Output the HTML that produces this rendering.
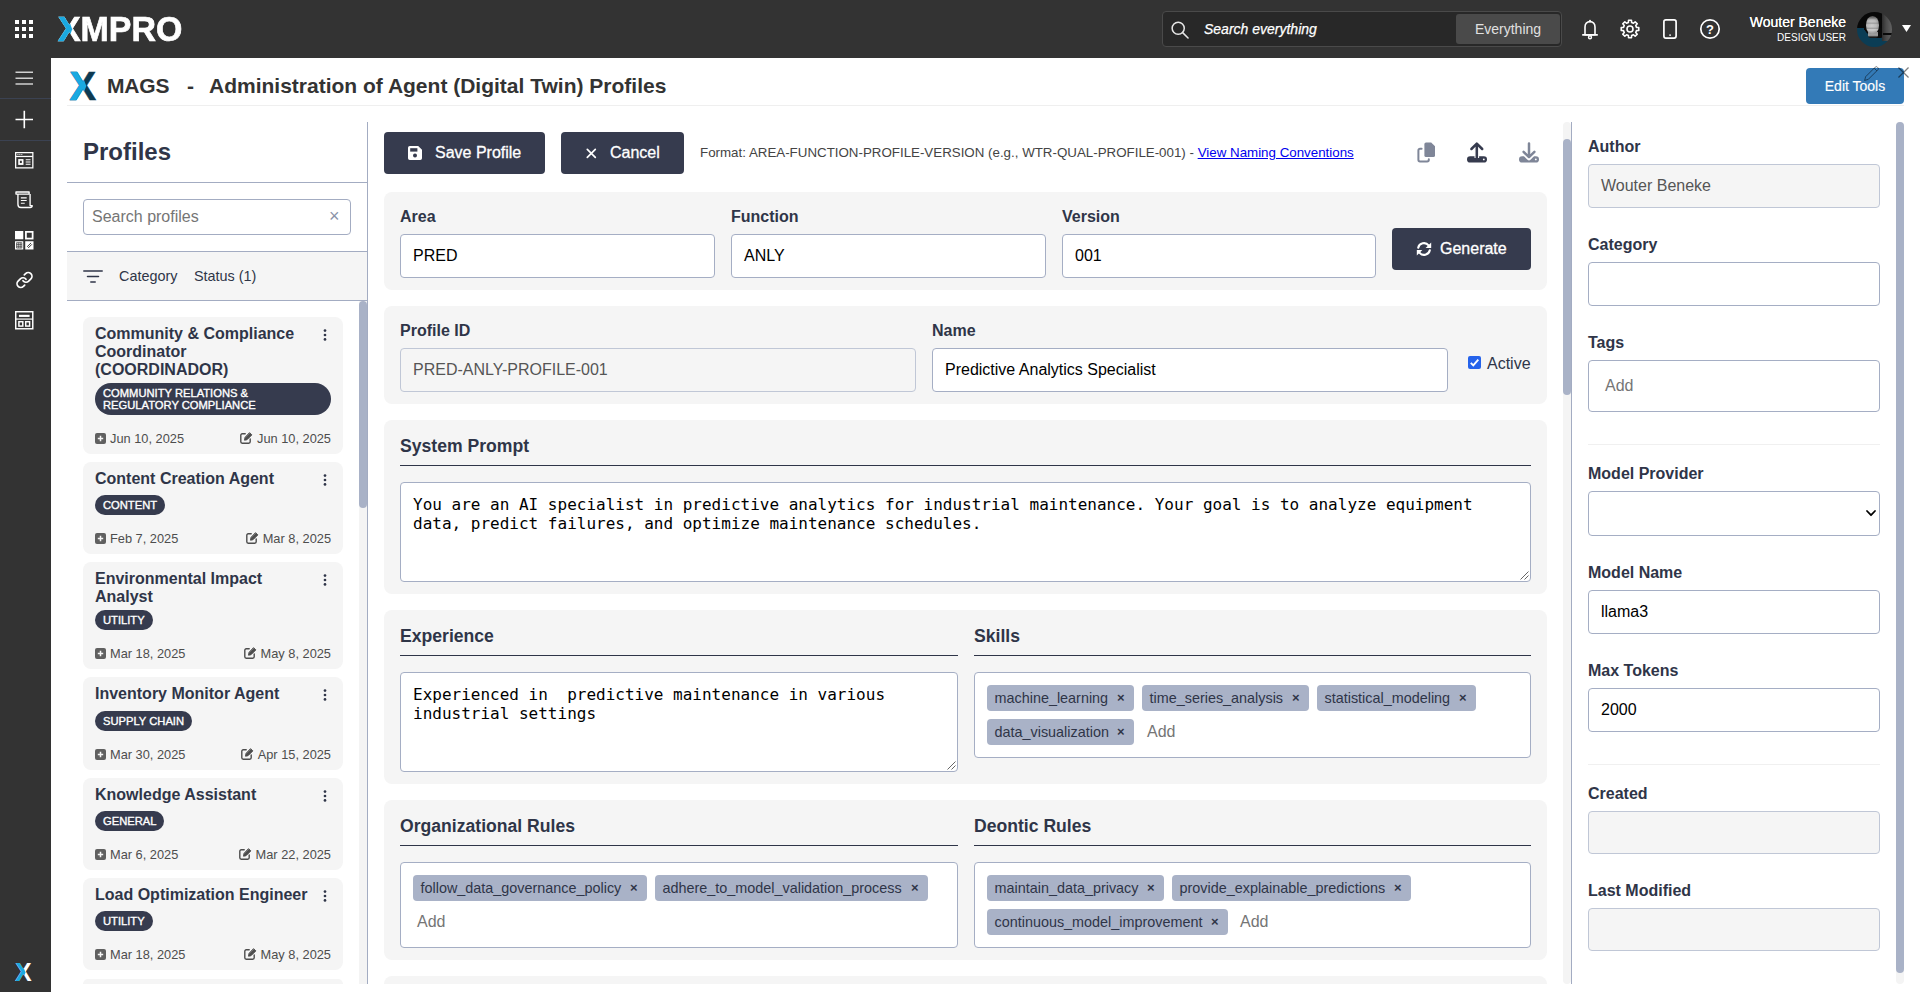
<!DOCTYPE html>
<html lang="en">
<head>
<meta charset="utf-8">
<title>MAGS - Administration of Agent (Digital Twin) Profiles</title>
<style>
*{box-sizing:border-box;margin:0;padding:0}
html,body{width:1920px;height:992px;overflow:hidden;background:#fff}
body{font-family:"Liberation Sans",Arial,Helvetica,sans-serif;color:#2f3548;position:relative;font-size:16px}
.abs{position:absolute}
#topbar{position:absolute;left:0;top:0;width:1920px;height:58px;background:#333333}
#sidebar{position:absolute;left:0;top:58px;width:51px;height:934px;background:#333333}
#sidebar .sep{position:absolute;left:0;width:51px;height:1px;background:#3b4252}
svg{display:block;overflow:visible}
.t{position:absolute;white-space:nowrap;line-height:1}
/* header */
#hdrline{position:absolute;left:67px;top:105px;width:1837px;height:1px;background:#efefef}
#title{left:107px;top:75px;font-size:21px;font-weight:bold;color:#333;letter-spacing:0}
#edittools{position:absolute;left:1806px;top:68px;width:98px;height:36px;background:#337ab7;border-radius:4px;color:#fff;font-size:14px;line-height:36px;text-align:center;-webkit-text-stroke:0.150px #fff}
/* left panel */
#lp-title{left:83px;top:140px;font-size:24px;font-weight:bold;color:#2f3548}
.hline{position:absolute;height:1px;background:#a3acc2}
.vline{position:absolute;width:1px;background:#a3acc2}
#search{position:absolute;left:83px;top:199px;width:268px;height:36px;border:1px solid #a3acc2;border-radius:4px;background:#fff}
#filterbar{position:absolute;left:67px;top:251px;width:300px;height:50px;background:#f5f5f5;border-top:1px solid #a3acc2;border-bottom:1px solid #a3acc2}
.pcard{position:absolute;left:83px;width:260px;background:#f5f5f5;border-radius:8px}
.pcard .nm{position:absolute;left:12px;top:8px;font-size:16px;font-weight:bold;line-height:18px;color:#2f3548;width:224px}
.pcard .badge{position:absolute;left:12px;background:#363b4e;color:#fff;font-size:11.200px;font-weight:normal;-webkit-text-stroke:0.350px #fff;border-radius:11px;padding:0 8px;height:20px;line-height:20px;white-space:nowrap}
.pcard .d1,.pcard .d2{position:absolute;font-size:12.800px;color:#4d4d4d;line-height:1;white-space:nowrap}
.pcard .d1{left:12px}
.pcard .d2{right:12px}
.scroll{position:absolute;background:#a9b2c7;border-radius:4px}
/* center */
.btn{position:absolute;background:#363b4e;color:#fff;border-radius:4px;font-size:16px;-webkit-text-stroke:0.300px #fff}
.card{position:absolute;left:384px;width:1163px;background:#f5f5f5;border-radius:8px}
.lbl{position:absolute;font-size:16px;font-weight:bold;color:#2f3548;line-height:1;white-space:nowrap}
.sec{position:absolute;font-size:17.600px;font-weight:bold;color:#2f3548;line-height:1;white-space:nowrap}
.inp{position:absolute;border:1px solid #a5aec4;border-radius:4px;background:#fff;font-size:16px;color:#000;padding-left:12px;white-space:nowrap}
.inp.ro{background:#f5f5f5;color:#555;border-color:#c0c7d6}
.uline{position:absolute;height:1px;background:#2f3548}
.ta{position:absolute;border:1px solid #a5aec4;border-radius:4px;background:#fff;font-family:"DejaVu Sans Mono","Liberation Mono",monospace;font-size:16px;line-height:19px;color:#000;padding:12px 12px;white-space:pre-wrap}
.tagbox{position:absolute;border:1px solid #a5aec4;border-radius:4px;background:#fff}
.chip{position:absolute;height:26px;background:#a9b2c7;border-radius:4px;font-size:14.400px;color:#2f3548;line-height:26px;padding-left:7.500px;white-space:nowrap}
.chip b{font-weight:bold;position:absolute;right:9.500px;top:-0.500px;font-size:13px}
.add{position:absolute;font-size:16px;color:#757575;line-height:1}

#logo{left:58px;top:12px;font-size:34.500px;font-weight:bold;color:#fff;transform:scaleX(0.982);transform-origin:0 0;-webkit-text-stroke:0.700px #fff}
.xx{position:relative;display:inline-block}.xx .xb{position:absolute;left:0;top:0;clip-path:polygon(0 0,34% 0,63% 50%,34% 100%,0 100%)}
#gsearch{position:absolute;left:1162px;top:11px;width:400px;height:36px;background:#282828;border:1px solid #4a4a4a;border-radius:4px}
#everything{position:absolute;left:293px;top:2px;width:104px;height:30px;background:#4a4a4a;border-radius:3px;color:#e0e0e0;font-size:14px;line-height:30px;text-align:center}
#avatar{position:absolute;left:1857px;top:12px;width:35px;height:35px;border-radius:50%;overflow:hidden;background:linear-gradient(to bottom,rgba(0,0,0,0) 60%,#0a0a0a 60%,#0a0a0a 67%,rgba(0,0,0,0) 67%) right 0 top 0/26% 100% no-repeat,linear-gradient(to right,#2e2e2e 0,#4a4a4a 40%,#636363 100%) right 0 top 0/29% 84% no-repeat,linear-gradient(to bottom,#080808 45%,rgba(0,0,0,0) 45%),radial-gradient(circle at 62% 26%,#0a0a0a 0,#0a0a0a 49%,#0b3d55 50%),#0b3d55}
#avatar i{position:absolute;display:block}
#avatar .neck{left:30%;top:58%;width:30%;height:17%;filter:blur(0.500px);background:linear-gradient(to bottom,#8e8e8e 0,#a2a2a2 55%,#1a1a1a 85%);border-radius:0 0 40% 40%}
#avatar .face{left:26%;top:11%;width:37%;height:52%;border-radius:48% 48% 46% 46%;filter:blur(0.600px);background:linear-gradient(to bottom,#4a4a4a 0,#707070 9%,rgba(0,0,0,0) 22%,rgba(0,0,0,0) 33%,rgba(110,110,110,.45) 40%,rgba(0,0,0,0) 48%,rgba(0,0,0,0) 62%,rgba(110,110,110,.5) 68%,rgba(225,225,225,.5) 76%,rgba(0,0,0,0) 88%),radial-gradient(ellipse at 45% 50%,#cbcbcb 0,#b9b9b9 45%,#8c8c8c 80%,#4a4a4a 100%)}
#hx{left:69.500px;top:66px;font-size:40px;font-weight:bold;color:#0d3a52;-webkit-text-stroke:0.500px #0d3a52}

#sblogo{left:15px;top:902px;font-size:25px;font-weight:bold;color:#fff}

.d1,.d2{display:flex;align-items:center}
</style>
</head>
<body>

<div id="topbar">
  <svg class="abs" style="left:15px;top:20px" width="18" height="18" viewBox="0 0 18 18" fill="#fff"><rect x="0" y="0" width="4" height="4"/><rect x="7" y="0" width="4" height="4"/><rect x="14" y="0" width="4" height="4"/><rect x="0" y="7" width="4" height="4"/><rect x="7" y="7" width="4" height="4"/><rect x="14" y="7" width="4" height="4"/><rect x="0" y="14" width="4" height="4"/><rect x="7" y="14" width="4" height="4"/><rect x="14" y="14" width="4" height="4"/></svg>
  <div id="logo" class="t"><span class="xx">X<span class="xb" style="color:#1aa9e1;-webkit-text-stroke:0.700px #1aa9e1">X</span></span>MPRO</div>
  <div id="gsearch">
    <svg class="abs" style="left:8px;top:8.500px" width="18" height="18" viewBox="0 0 19 19" fill="none" stroke="#e6e6e6" stroke-width="1.6"><circle cx="7.6" cy="7.6" r="6.4"/><path d="M12.3 12.3 L18 18" stroke-linecap="round"/></svg>
    <div class="t" style="left:41px;top:10px;font-size:14px;font-style:italic;color:#fff;-webkit-text-stroke:0.250px #fff">Search everything</div>
    <div id="everything">Everything</div>
  </div>
  <!-- bell -->
  <svg class="abs" style="left:1580px;top:18.500px" width="20" height="22" viewBox="0 0 20 22" fill="none" stroke="#fff" stroke-width="1.600" stroke-linejoin="round" stroke-linecap="round"><path d="M10 2.600c-3 0-5 2.300-5 5.300v7.900h10V7.900c0-3-2-5.300-5-5.300z"/><path d="M2.800 15.900h14.400"/><path d="M10 1.600v.8" stroke-width="1.800"/><circle cx="10" cy="18.200" r="1.500" stroke-width="1.400"/></svg>
  <!-- gear -->
  <svg class="abs" style="left:1620px;top:19px" width="20" height="20" viewBox="0 0 20 20" fill="none" stroke="#fff" stroke-width="1.600" stroke-linejoin="round"><path d="M8.38 3.50 L8.54 1.22 L11.46 1.22 L11.62 3.50 L13.46 4.26 L15.17 2.76 L17.24 4.83 L15.74 6.54 L16.50 8.38 L18.78 8.54 L18.78 11.46 L16.50 11.62 L15.74 13.46 L17.24 15.17 L15.17 17.24 L13.46 15.74 L11.62 16.50 L11.46 18.78 L8.54 18.78 L8.38 16.50 L6.54 15.74 L4.83 17.24 L2.76 15.17 L4.26 13.46 L3.50 11.62 L1.22 11.46 L1.22 8.54 L3.50 8.38 L4.26 6.54 L2.76 4.83 L4.83 2.76 L6.54 4.26z"/><circle cx="10" cy="10" r="3"/></svg>
  <!-- phone -->
  <svg class="abs" style="left:1663px;top:19px" width="14" height="20" viewBox="0 0 14 20" fill="none" stroke="#fff" stroke-width="1.700"><rect x="0.9" y="0.9" width="12.2" height="18.2" rx="2"/><path d="M6.200 16.200h1.800" stroke-width="1.300"/></svg>
  <!-- help -->
  <svg class="abs" style="left:1700px;top:19px" width="20" height="20" viewBox="0 0 20 20" fill="none" stroke="#fff" stroke-width="1.700"><circle cx="10" cy="10" r="9.200"/><text x="10" y="14.600" text-anchor="middle" font-family="Liberation Sans, Arial, sans-serif" font-size="13" font-weight="bold" fill="#fff" stroke="none">?</text></svg>
  <div class="t" style="right:74px;top:15px;font-size:14px;color:#fff;text-shadow:0 0 0.600px #fff">Wouter Beneke</div>
  <div class="t" style="right:74px;top:33px;font-size:10px;color:#fff">DESIGN USER</div>
  <div id="avatar"><i class="neck"></i><i class="face"></i></div>
  <svg class="abs" style="left:1902px;top:25px" width="9" height="7" viewBox="0 0 9 7"><path d="M0 0h9L4.500 7z" fill="#fff"/></svg>
</div>

<div id="sidebar">
  <!-- hamburger (coords relative to sidebar top=58) -->
  <svg class="abs" style="left:15px;top:13px" width="19" height="14" viewBox="0 0 19 14" stroke="#d0d0d0" stroke-width="1.400"><path d="M0.500 1.200h17.500M0.500 7.200h17.500M0.500 13h17.500"/></svg>
  <div class="sep" style="top:40px"></div>
  <svg class="abs" style="left:15px;top:52px" width="19" height="19" viewBox="0 0 19 19" stroke="#fff" stroke-width="1.600"><path d="M9.300 0.800v17.500M0.500 9.500h17.500"/></svg>
  <div class="sep" style="top:82px"></div>
  <!-- dashboard window -->
  <svg class="abs" style="left:15px;top:93.500px" width="18.500" height="16.500" viewBox="0 0 19 17" fill="none" stroke="#fff" stroke-width="1.300"><rect x="0.650" y="0.650" width="17.700" height="15.700"/><path d="M0.650 4.600h17.700"/><rect x="3.300" y="7.300" width="5.400" height="6" fill="#fff" stroke="none"/><rect x="5" y="9" width="2" height="2.400" fill="#333" stroke="none"/><path d="M11 8h5M11 10.300h5M11 12.600h5" stroke-width="1.200"/><path d="M2.500 2.600h1M4.500 2.600h1M6.500 2.600h1" stroke-width="1"/></svg>
  <!-- scroll -->
  <svg class="abs" style="left:15px;top:133px" width="18.500" height="17.500" viewBox="0 0 19 18" fill="none" stroke="#fff" stroke-width="1.400" stroke-linejoin="round"><path d="M1 3.200V1h13.500v2.200z"/><path d="M3 3.200v10.500c0 2 1 3.300 3 3.300h9.500c1.300 0 2.200-.8 2.200-2h-2.200V3.200"/><path d="M6 7h6M6 9.800h6M6 12.600h4" stroke-width="1.200"/></svg>
  <!-- four squares -->
  <svg class="abs" style="left:15px;top:173px" width="18.500" height="18.500" viewBox="0 0 19 19" fill="none" stroke="#fff" stroke-width="1.300"><rect x="0" y="0" width="8.500" height="8.500" fill="#fff" stroke="none"/><rect x="11.200" y="0.900" width="6.900" height="6.900" stroke-width="1.800"/><rect x="0" y="10.500" width="8.500" height="8.500" fill="#fff" stroke="none"/><path d="M3.400 12v5.500M5.300 12v5.500M1.600 13.800h5.400M1.600 15.700h5.400M1.600 12h5.400v5.500H1.600z" stroke="#333" stroke-width=".7"/><rect x="10.500" y="10.500" width="8.500" height="8.500" fill="#fff" stroke="none"/><path d="M12.500 16.200l4-4M13.600 17.400l3.700-3.700" stroke="#333" stroke-width="1"/></svg>
  <!-- link -->
  <svg class="abs" style="left:15px;top:213px" width="19" height="18" viewBox="0 0 24 24" fill="none" stroke="#fff" stroke-width="2.300" stroke-linecap="round" stroke-linejoin="round"><path d="M10 13a5 5 0 0 0 7.540.54l3-3a5 5 0 0 0-7.070-7.070l-1.720 1.710"/><path d="M14 11a5 5 0 0 0-7.540-.54l-3 3a5 5 0 0 0 7.070 7.070l1.710-1.710"/></svg>
  <!-- calculator-like -->
  <svg class="abs" style="left:15px;top:252.500px" width="18.500" height="18.500" viewBox="0 0 19 19" fill="none" stroke="#fff" stroke-width="1.500"><rect x="0.750" y="0.750" width="17.500" height="17.500"/><path d="M4 5h11" stroke-width="2.200"/><path d="M1 8.300h17" stroke-width="1.200"/><rect x="4" y="11" width="4" height="4.500"/><rect x="11" y="11" width="4" height="4.500"/></svg>
  <div id="sblogo" class="t"><span class="xx">X<span class="xb" style="color:#1aa9e1">X</span></span></div>
</div>

<div id="header">
  <div id="hx" class="t"><span class="xx">X<span class="xb" style="color:#1aa9e1;-webkit-text-stroke:0.500px #1aa9e1">X</span></span></div>
  <div id="title" class="t"><span style="letter-spacing:-0.150px">MAGS</span><span style="position:absolute;left:80px">-</span><span style="position:absolute;left:102px">Administration of Agent (Digital Twin) Profiles</span></div>
  <div id="hdrline"></div>
  <div id="edittools">Edit Tools</div>
  <svg class="abs" style="left:1863px;top:64.500px" width="17" height="17" viewBox="0 0 16 16" fill="none" stroke="rgba(0,0,0,0.500)" stroke-width="0.900"><path d="M1.500 14.500l1-3.500L11.500 2a1.400 1.400 0 0 1 2 0l.5.500a1.400 1.400 0 0 1 0 2L5 13.500z"/><path d="M10.500 3l2.500 2.500"/></svg>
  <svg class="abs" style="left:1897.500px;top:67px" width="11" height="11" viewBox="0 0 12 12" stroke="rgba(0,0,0,0.500)" stroke-width="1.400"><path d="M0.500 0.500l11 11M11.500 0.500l-11 11"/></svg>
</div>

<div id="left">
  <div id="lp-title" class="t">Profiles</div>
  <div class="hline" style="left:67px;top:182px;width:300px"></div>
  <div id="search"><div class="t" style="left:8px;top:9px;font-size:16px;color:#757575">Search profiles</div><div class="t" style="left:245px;top:7px;font-size:18px;color:#8a93a8">&times;</div></div>
  <div id="filterbar">
    <svg class="abs" style="left:16px;top:18px" width="20" height="13" viewBox="0 0 20 13" stroke="#2f3548" stroke-width="1.500" stroke-linecap="round"><path d="M0.800 1h18.400M4.500 6.500h11M7.800 12h4.400"/></svg>
    <div class="t" style="left:52px;top:17px;font-size:14.400px;color:#2f3548">Category</div>
    <div class="t" style="left:127px;top:17px;font-size:14.400px;color:#2f3548">Status (1)</div>
  </div>
  <div class="vline" style="left:367px;top:122px;height:862px"></div>
  <div class="abs" style="left:359px;top:301px;width:8px;height:683px;background:#f4f4f4"></div>
  <div class="scroll" style="left:359px;top:301px;width:8px;height:207px"></div>

  <div class="pcard" style="top:317px;height:137px"><div class="nm">Community &amp; Compliance Coordinator (COORDINADOR)</div><svg class="abs" style="left:240px;top:12px" width="4" height="12" viewBox="0 0 4 12" fill="#2f3548"><circle cx="2" cy="1.600" r="1.350"/><circle cx="2" cy="6" r="1.350"/><circle cx="2" cy="10.400" r="1.350"/></svg><div class="badge" style="top:66px;height:32px;line-height:12px;padding-top:4px;width:236px;border-radius:16px;white-space:normal">COMMUNITY RELATIONS &amp;<br>REGULATORY COMPLIANCE</div><div class="d1" style="top:116px"><svg width="11" height="11" viewBox="0 0 11 11" style="margin-right:4px;flex-shrink:0;position:relative;top:-1px"><rect width="11" height="11" rx="2" fill="#606060"/><path d="M5.500 2.800v5.400M2.800 5.500h5.400" stroke="#f5f5f5" stroke-width="1.500"/></svg><span>Jun 10, 2025</span></div><div class="d2" style="top:116px"><svg width="13" height="12" viewBox="0 0 13 12" fill="none" stroke="#4d4d4d" stroke-width="1.400" stroke-linejoin="round" stroke-linecap="round" style="margin-right:4px;position:relative;top:-1px"><path d="M5.200 1.800H2.200a1.400 1.400 0 0 0-1.400 1.400v6.600a1.400 1.400 0 0 0 1.400 1.400h6.600a1.400 1.400 0 0 0 1.400-1.400V7"/><path d="M9.800 0.900l2 2L7 7.700l-2.500.5.500-2.500z" fill="#4d4d4d" stroke-width="1"/></svg><span>Jun 10, 2025</span></div></div>
  <div class="pcard" style="top:462px;height:92px"><div class="nm">Content Creation Agent</div><svg class="abs" style="left:240px;top:12px" width="4" height="12" viewBox="0 0 4 12" fill="#2f3548"><circle cx="2" cy="1.600" r="1.350"/><circle cx="2" cy="6" r="1.350"/><circle cx="2" cy="10.400" r="1.350"/></svg><div class="badge" style="top:33px;">CONTENT</div><div class="d1" style="top:71px"><svg width="11" height="11" viewBox="0 0 11 11" style="margin-right:4px;flex-shrink:0;position:relative;top:-1px"><rect width="11" height="11" rx="2" fill="#606060"/><path d="M5.500 2.800v5.400M2.800 5.500h5.400" stroke="#f5f5f5" stroke-width="1.500"/></svg><span>Feb 7, 2025</span></div><div class="d2" style="top:71px"><svg width="13" height="12" viewBox="0 0 13 12" fill="none" stroke="#4d4d4d" stroke-width="1.400" stroke-linejoin="round" stroke-linecap="round" style="margin-right:4px;position:relative;top:-1px"><path d="M5.200 1.800H2.200a1.400 1.400 0 0 0-1.400 1.400v6.600a1.400 1.400 0 0 0 1.400 1.400h6.600a1.400 1.400 0 0 0 1.400-1.400V7"/><path d="M9.800 0.900l2 2L7 7.700l-2.500.5.500-2.500z" fill="#4d4d4d" stroke-width="1"/></svg><span>Mar 8, 2025</span></div></div>
  <div class="pcard" style="top:562px;height:107px"><div class="nm">Environmental Impact Analyst</div><svg class="abs" style="left:240px;top:12px" width="4" height="12" viewBox="0 0 4 12" fill="#2f3548"><circle cx="2" cy="1.600" r="1.350"/><circle cx="2" cy="6" r="1.350"/><circle cx="2" cy="10.400" r="1.350"/></svg><div class="badge" style="top:48px;">UTILITY</div><div class="d1" style="top:86px"><svg width="11" height="11" viewBox="0 0 11 11" style="margin-right:4px;flex-shrink:0;position:relative;top:-1px"><rect width="11" height="11" rx="2" fill="#606060"/><path d="M5.500 2.800v5.400M2.800 5.500h5.400" stroke="#f5f5f5" stroke-width="1.500"/></svg><span>Mar 18, 2025</span></div><div class="d2" style="top:86px"><svg width="13" height="12" viewBox="0 0 13 12" fill="none" stroke="#4d4d4d" stroke-width="1.400" stroke-linejoin="round" stroke-linecap="round" style="margin-right:4px;position:relative;top:-1px"><path d="M5.200 1.800H2.200a1.400 1.400 0 0 0-1.400 1.400v6.600a1.400 1.400 0 0 0 1.400 1.400h6.600a1.400 1.400 0 0 0 1.400-1.400V7"/><path d="M9.800 0.900l2 2L7 7.700l-2.500.5.500-2.500z" fill="#4d4d4d" stroke-width="1"/></svg><span>May 8, 2025</span></div></div>
  <div class="pcard" style="top:677px;height:93px"><div class="nm">Inventory Monitor Agent</div><svg class="abs" style="left:240px;top:12px" width="4" height="12" viewBox="0 0 4 12" fill="#2f3548"><circle cx="2" cy="1.600" r="1.350"/><circle cx="2" cy="6" r="1.350"/><circle cx="2" cy="10.400" r="1.350"/></svg><div class="badge" style="top:34px;">SUPPLY CHAIN</div><div class="d1" style="top:72px"><svg width="11" height="11" viewBox="0 0 11 11" style="margin-right:4px;flex-shrink:0;position:relative;top:-1px"><rect width="11" height="11" rx="2" fill="#606060"/><path d="M5.500 2.800v5.400M2.800 5.500h5.400" stroke="#f5f5f5" stroke-width="1.500"/></svg><span>Mar 30, 2025</span></div><div class="d2" style="top:72px"><svg width="13" height="12" viewBox="0 0 13 12" fill="none" stroke="#4d4d4d" stroke-width="1.400" stroke-linejoin="round" stroke-linecap="round" style="margin-right:4px;position:relative;top:-1px"><path d="M5.200 1.800H2.200a1.400 1.400 0 0 0-1.400 1.400v6.600a1.400 1.400 0 0 0 1.400 1.400h6.600a1.400 1.400 0 0 0 1.400-1.400V7"/><path d="M9.800 0.900l2 2L7 7.700l-2.500.5.500-2.500z" fill="#4d4d4d" stroke-width="1"/></svg><span>Apr 15, 2025</span></div></div>
  <div class="pcard" style="top:778px;height:92px"><div class="nm">Knowledge Assistant</div><svg class="abs" style="left:240px;top:12px" width="4" height="12" viewBox="0 0 4 12" fill="#2f3548"><circle cx="2" cy="1.600" r="1.350"/><circle cx="2" cy="6" r="1.350"/><circle cx="2" cy="10.400" r="1.350"/></svg><div class="badge" style="top:33px;">GENERAL</div><div class="d1" style="top:71px"><svg width="11" height="11" viewBox="0 0 11 11" style="margin-right:4px;flex-shrink:0;position:relative;top:-1px"><rect width="11" height="11" rx="2" fill="#606060"/><path d="M5.500 2.800v5.400M2.800 5.500h5.400" stroke="#f5f5f5" stroke-width="1.500"/></svg><span>Mar 6, 2025</span></div><div class="d2" style="top:71px"><svg width="13" height="12" viewBox="0 0 13 12" fill="none" stroke="#4d4d4d" stroke-width="1.400" stroke-linejoin="round" stroke-linecap="round" style="margin-right:4px;position:relative;top:-1px"><path d="M5.200 1.800H2.200a1.400 1.400 0 0 0-1.400 1.400v6.600a1.400 1.400 0 0 0 1.400 1.400h6.600a1.400 1.400 0 0 0 1.400-1.400V7"/><path d="M9.800 0.900l2 2L7 7.700l-2.500.5.500-2.500z" fill="#4d4d4d" stroke-width="1"/></svg><span>Mar 22, 2025</span></div></div>
  <div class="pcard" style="top:878px;height:92px"><div class="nm">Load Optimization Engineer</div><svg class="abs" style="left:240px;top:12px" width="4" height="12" viewBox="0 0 4 12" fill="#2f3548"><circle cx="2" cy="1.600" r="1.350"/><circle cx="2" cy="6" r="1.350"/><circle cx="2" cy="10.400" r="1.350"/></svg><div class="badge" style="top:33px;">UTILITY</div><div class="d1" style="top:71px"><svg width="11" height="11" viewBox="0 0 11 11" style="margin-right:4px;flex-shrink:0;position:relative;top:-1px"><rect width="11" height="11" rx="2" fill="#606060"/><path d="M5.500 2.800v5.400M2.800 5.500h5.400" stroke="#f5f5f5" stroke-width="1.500"/></svg><span>Mar 18, 2025</span></div><div class="d2" style="top:71px"><svg width="13" height="12" viewBox="0 0 13 12" fill="none" stroke="#4d4d4d" stroke-width="1.400" stroke-linejoin="round" stroke-linecap="round" style="margin-right:4px;position:relative;top:-1px"><path d="M5.200 1.800H2.200a1.400 1.400 0 0 0-1.400 1.400v6.600a1.400 1.400 0 0 0 1.400 1.400h6.600a1.400 1.400 0 0 0 1.400-1.400V7"/><path d="M9.800 0.900l2 2L7 7.700l-2.500.5.500-2.500z" fill="#4d4d4d" stroke-width="1"/></svg><span>May 8, 2025</span></div></div>
  <div class="pcard" style="top:979px;height:5px;border-radius:8px 8px 0 0"></div>
</div>
<div id="center">
  <div class="btn" style="left:384px;top:132px;width:161px;height:42px">
    <svg class="abs" style="left:24px;top:14px" width="14" height="14" viewBox="0 0 14 14"><path d="M1.800 0h8.400L14 3.800v8.400A1.800 1.800 0 0 1 12.200 14H1.800A1.800 1.800 0 0 1 0 12.200V1.800A1.800 1.800 0 0 1 1.800 0z" fill="#fff"/><rect x="2.200" y="2.200" width="7.200" height="3.400" fill="#363b4e"/><circle cx="7" cy="9.600" r="2" fill="#363b4e"/></svg>
    <div class="t" style="left:51px;top:13px;font-size:16px">Save Profile</div>
  </div>
  <div class="btn" style="left:561px;top:132px;width:123px;height:42px">
    <svg class="abs" style="left:25px;top:16px" width="11" height="11" viewBox="0 0 11 11" stroke="#fff" stroke-width="1.700" stroke-linecap="round"><path d="M1.300 1.300l8 8M9.300 1.300l-8 8"/></svg>
    <div class="t" style="left:49px;top:13px;font-size:16px">Cancel</div>
  </div>
  <div class="t" style="left:700px;top:146px;font-size:13.330px;color:#444">Format: AREA-FUNCTION-PROFILE-VERSION (e.g., WTR-QUAL-PROFILE-001) - <span style="color:#0000ee;text-decoration:underline">View Naming Conventions</span></div>
  <!-- copy -->
  <svg class="abs" style="left:1416px;top:141px" width="22" height="23" viewBox="0 0 22 23"><path d="M10 1.500h5.200L19 5.300v9.200a1.600 1.600 0 0 1-1.600 1.600H10a1.600 1.600 0 0 1-1.600-1.600V3.100A1.600 1.600 0 0 1 10 1.500z" fill="#7f8698"/><path d="M5.600 7.800H4a1.600 1.600 0 0 0-1.600 1.600v9.400A1.600 1.600 0 0 0 4 20.400h7.200a1.600 1.600 0 0 0 1.600-1.600v-.6" fill="none" stroke="#7f8698" stroke-width="2" stroke-linecap="round"/></svg>
  <!-- upload -->
  <svg class="abs" style="left:1466px;top:141px" width="22" height="23" viewBox="0 0 22 23" fill="none" stroke-linecap="round" stroke-linejoin="round"><rect x="1" y="15.300" width="20" height="6.200" rx="3.100" fill="#363b4e"/><path d="M10.800 17V3" stroke="#f8f8f8" stroke-width="4.600" stroke-linecap="butt"/><path d="M10.800 16.500V3M5.400 8l5.400-5.400L16.200 8" stroke="#363b4e" stroke-width="2.500"/><circle cx="17.800" cy="18.400" r="0.900" fill="#fff"/></svg>
  <!-- download -->
  <svg class="abs" style="left:1518px;top:141px" width="22" height="23" viewBox="0 0 22 23" fill="none" stroke-linecap="round" stroke-linejoin="round"><rect x="1" y="15.300" width="20" height="6.200" rx="3.100" fill="#7f8698"/><path d="M11 17.500V9" stroke="#fff" stroke-width="4.600" stroke-linecap="butt"/><path d="M7.300 13.500L11 17.200l3.700-3.700" stroke="#fff" stroke-width="4.200"/><path d="M11 16V2.400M5.600 10.800L11 16.200l5.400-5.400" stroke="#7f8698" stroke-width="2.500"/><circle cx="17.800" cy="18.400" r="0.900" fill="#fff"/></svg>

  <div class="card" style="top:192px;height:98px">
    <div class="lbl" style="left:16px;top:17px">Area</div>
    <div class="inp" style="left:16px;top:42px;width:315px;height:44px;line-height:42px">PRED</div>
    <div class="lbl" style="left:347px;top:17px">Function</div>
    <div class="inp" style="left:347px;top:42px;width:315px;height:44px;line-height:42px">ANLY</div>
    <div class="lbl" style="left:678px;top:17px">Version</div>
    <div class="inp" style="left:678px;top:42px;width:314px;height:44px;line-height:42px">001</div>
    <div class="btn" style="left:1008px;top:36px;width:139px;height:42px">
      <svg class="abs" style="left:24px;top:13px" width="16" height="16" viewBox="0 0 16 16" fill="none" stroke="#fff" stroke-width="2.100" stroke-linecap="round"><path d="M2.200 6.800A5.900 5.900 0 0 1 12.600 4.400"/><path d="M13.800 9.200A5.900 5.900 0 0 1 3.400 11.600"/><path d="M15.200 1.400v5.600H9.600z" fill="#fff" stroke="none"/><path d="M0.800 14.600V9h5.600z" fill="#fff" stroke="none"/></svg>
      <div class="t" style="left:48px;top:13px;font-size:16px">Generate</div>
    </div>
  </div>

  <div class="card" style="top:306px;height:98px">
    <div class="lbl" style="left:16px;top:17px">Profile ID</div>
    <div class="inp ro" style="left:16px;top:42px;width:516px;height:44px;line-height:42px">PRED-ANLY-PROFILE-001</div>
    <div class="lbl" style="left:548px;top:17px">Name</div>
    <div class="inp" style="left:548px;top:42px;width:516px;height:44px;line-height:42px">Predictive Analytics Specialist</div>
    <div class="abs" style="left:1084px;top:50px;width:13px;height:13px;background:#2563eb;border-radius:2px"><svg width="13" height="13" viewBox="0 0 13 13" fill="none" stroke="#fff" stroke-width="1.900"><path d="M2.800 6.800l2.500 2.500 5-5.600"/></svg></div>
    <div class="t" style="left:1103px;top:50px;font-size:16px;color:#2f3548">Active</div>
  </div>

  <div class="card" style="top:420px;height:174px">
    <div class="sec" style="left:16px;top:18px">System Prompt</div>
    <div class="uline" style="left:16px;top:45px;width:1131px"></div>
    <div class="ta" style="left:16px;top:62px;width:1131px;height:100px">You are an AI specialist in predictive analytics for industrial maintenance. Your goal is to analyze equipment
data, predict failures, and optimize maintenance schedules.</div>
    <svg class="abs" style="left:1136px;top:151px" width="9" height="9" viewBox="0 0 9 9" stroke="#666" stroke-width="1"><path d="M8.500 0.500l-8 8M8.500 4.500l-4 4"/></svg>
  </div>

  <div class="card" style="top:610px;height:174px">
    <div class="sec" style="left:16px;top:18px">Experience</div>
    <div class="uline" style="left:16px;top:45px;width:558px"></div>
    <div class="ta" style="left:16px;top:62px;width:558px;height:100px">Experienced in  predictive maintenance in various
industrial settings</div>
    <svg class="abs" style="left:563px;top:151px" width="9" height="9" viewBox="0 0 9 9" stroke="#666" stroke-width="1"><path d="M8.500 0.500l-8 8M8.500 4.500l-4 4"/></svg>
    <div class="sec" style="left:590px;top:18px">Skills</div>
    <div class="uline" style="left:590px;top:45px;width:557px"></div>
    <div class="tagbox" style="left:590px;top:62px;width:557px;height:86px">
      <div class="chip" style="left:12px;top:12px;width:147px">machine_learning<b>&times;</b></div>
      <div class="chip" style="left:167px;top:12px;width:167px">time_series_analysis<b>&times;</b></div>
      <div class="chip" style="left:342px;top:12px;width:159px">statistical_modeling<b>&times;</b></div>
      <div class="chip" style="left:12px;top:46px;width:147px">data_visualization<b>&times;</b></div>
      <div class="add" style="left:172px;top:51px">Add</div>
    </div>
  </div>

  <div class="card" style="top:800px;height:160px">
    <div class="sec" style="left:16px;top:18px">Organizational Rules</div>
    <div class="uline" style="left:16px;top:45px;width:558px"></div>
    <div class="tagbox" style="left:16px;top:62px;width:558px;height:86px">
      <div class="chip" style="left:12px;top:12px;width:234px">follow_data_governance_policy<b>&times;</b></div>
      <div class="chip" style="left:254px;top:12px;width:273px">adhere_to_model_validation_process<b>&times;</b></div>
      <div class="add" style="left:16px;top:51px">Add</div>
    </div>
    <div class="sec" style="left:590px;top:18px">Deontic Rules</div>
    <div class="uline" style="left:590px;top:45px;width:557px"></div>
    <div class="tagbox" style="left:590px;top:62px;width:557px;height:86px">
      <div class="chip" style="left:12px;top:12px;width:177px">maintain_data_privacy<b>&times;</b></div>
      <div class="chip" style="left:197px;top:12px;width:239px">provide_explainable_predictions<b>&times;</b></div>
      <div class="chip" style="left:12px;top:46px;width:241px">continuous_model_improvement<b>&times;</b></div>
      <div class="add" style="left:265px;top:51px">Add</div>
    </div>
  </div>
  <div class="card" style="top:976px;height:8px;border-radius:8px 8px 0 0"></div>

  <div class="abs" style="left:1563px;top:122px;width:8px;height:862px;background:#f4f4f4;border-radius:4px"></div>
  <div class="scroll" style="left:1563px;top:139px;width:8px;height:256px"></div>
  <div class="vline" style="left:1571px;top:122px;height:862px"></div>
</div>

<div id="right">
  <div class="lbl" style="left:1588px;top:139px">Author</div>
  <div class="inp ro" style="left:1588px;top:164px;width:292px;height:44px;line-height:42px">Wouter Beneke</div>
  <div class="lbl" style="left:1588px;top:237px">Category</div>
  <div class="inp" style="left:1588px;top:262px;width:292px;height:44px"></div>
  <div class="lbl" style="left:1588px;top:335px">Tags</div>
  <div class="tagbox" style="left:1588px;top:360px;width:292px;height:52px"><div class="add" style="left:16px;top:17px">Add</div></div>
  <div class="abs" style="left:1588px;top:444px;width:292px;height:1px;background:#f0f0f0"></div>
  <div class="lbl" style="left:1588px;top:466px">Model Provider</div>
  <div class="inp" style="left:1588px;top:491px;width:292px;height:45px"><svg class="abs" style="left:277px;top:18px" width="10" height="7" viewBox="0 0 10 7" fill="none" stroke="#000" stroke-width="1.800" stroke-linecap="round" stroke-linejoin="round"><path d="M1 1l4 4.200L9 1"/></svg></div>
  <div class="lbl" style="left:1588px;top:565px">Model Name</div>
  <div class="inp" style="left:1588px;top:590px;width:292px;height:44px;line-height:42px">llama3</div>
  <div class="lbl" style="left:1588px;top:663px">Max Tokens</div>
  <div class="inp" style="left:1588px;top:688px;width:292px;height:44px;line-height:42px">2000</div>
  <div class="abs" style="left:1588px;top:764px;width:292px;height:1px;background:#f0f0f0"></div>
  <div class="lbl" style="left:1588px;top:786px">Created</div>
  <div class="inp ro" style="left:1588px;top:811px;width:292px;height:43px"></div>
  <div class="lbl" style="left:1588px;top:883px">Last Modified</div>
  <div class="inp ro" style="left:1588px;top:908px;width:292px;height:43px"></div>
  <div class="abs" style="left:1896px;top:122px;width:8px;height:862px;background:#f4f4f4;border-radius:4px"></div>
  <div class="scroll" style="left:1896px;top:122px;width:8px;height:851px"></div>
</div>

</body>
</html>
